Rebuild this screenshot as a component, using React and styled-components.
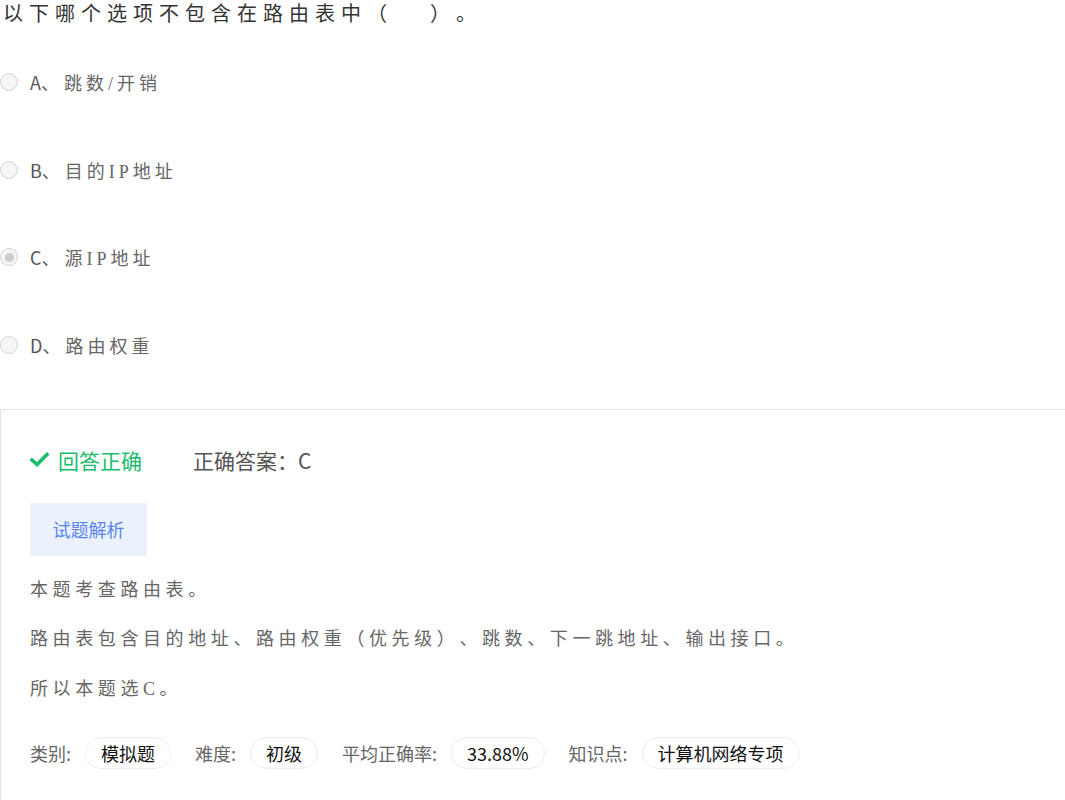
import React from "react";
import styled, { createGlobalStyle } from "styled-components";

const Global = createGlobalStyle`
  html, body { margin: 0; padding: 0; background: #fff; }
  body {
    font-family: "Noto Sans CJK SC", "Noto Sans", sans-serif;
    text-spacing-trim: space-all;
  }
`;

const Page = styled.div`
  width: 1065px;
  box-sizing: border-box;
`;

const Question = styled.div`
  font-family: "Liberation Serif", "Noto Sans CJK SC", serif;
  font-size: 20px;
  letter-spacing: 6px;
  line-height: 28px;
  color: #333;
  padding-left: 3px;
  white-space: pre;
`;

const Options = styled.div`
  margin-top: 34px;
  display: flex;
  flex-direction: column;
`;

const Option = styled.label`
  display: flex;
  align-items: center;
  height: 40px;
  margin-bottom: 47.5px;
`;

const Radio = styled.span`
  width: 18px;
  height: 18px;
  box-sizing: border-box;
  border-radius: 50%;
  border: 1px solid #d4d4d4;
  background: #f5f5f5;
  display: flex;
  align-items: center;
  justify-content: center;
  &::after {
    content: "";
    width: 9px;
    height: 9px;
    border-radius: 50%;
    background: ${(p) => (p.checked ? "#cdcdcd" : "transparent")};
  }
`;

const Letter = styled.span`
  font-family: "Noto Sans CJK SC", sans-serif;
  font-size: 18px;
  color: #555;
  margin-left: 12px;
`;

const OptionText = styled.span`
  font-family: "Liberation Serif", "Noto Sans CJK SC", serif;
  font-size: 18px;
  letter-spacing: 4px;
  color: #666;
  margin-left: 5px;
`;

const Panel = styled.div`
  margin-top: -3.5px;
  border-top: 1px solid #e3e3e3;
  border-left: 1px solid #e3e3e3;
  padding: 35px 30px 40px 29px;
`;

const ResultRow = styled.div`
  display: flex;
  align-items: center;
  height: 30px;
  font-size: 21px;
`;

const Correct = styled.span`
  display: flex;
  align-items: center;
  gap: 9px;
  color: #19be6b;
`;

const Answer = styled.span`
  color: #555;
  margin-left: 51px;
`;

const AnalysisButton = styled.div`
  margin-top: 28px;
  width: 117px;
  height: 53px;
  background: #ebf2fe;
  color: #5a83f0;
  font-size: 18px;
  display: flex;
  align-items: center;
  justify-content: center;
`;

const Explain = styled.div`
  margin-top: 10px;
  font-family: "Liberation Serif", "Noto Sans CJK SC", serif;
  font-size: 18px;
  letter-spacing: 4.6px;
  line-height: 49.5px;
  color: #666;
`;

const Para = styled.p`
  margin: 0;
`;

const Tags = styled.div`
  margin-top: 23px;
  display: flex;
  align-items: center;
  font-size: 18px;
`;

const TagLabel = styled.span`
  color: #666;
  margin-right: 14px;
`;

const Tag = styled.span`
  display: inline-flex;
  align-items: center;
  height: 32px;
  box-sizing: border-box;
  padding: 0 15px;
  border: 1px solid #ececec;
  border-radius: 16px;
  color: #111;
  margin-right: 24px;
`;

const Check = () => (
  <svg width="19" height="15" viewBox="0 0 19 15">
    <path d="M2 8 L7 12.5 L17 2.5" fill="none" stroke="#19be6b" strokeWidth="3.6" strokeLinecap="square" />
  </svg>
);

const options = [
  ["A", "跳数/开销"],
  ["B", "目的IP地址"],
  ["C", "源IP地址", true],
  ["D", "路由权重"],
];

export default function App() {
  return (
    <Page>
      <Global />
      <Question>以下哪个选项不包含在路由表中（　 ）。</Question>
      <Options>
        {options.map(([l, t, c]) => (
          <Option key={l}>
            <Radio checked={!!c} />
            <Letter>{l}、</Letter>
            <OptionText>{t}</OptionText>
          </Option>
        ))}
      </Options>
      <Panel>
        <ResultRow>
          <Correct>
            <Check />
            回答正确
          </Correct>
          <Answer>正确答案：C</Answer>
        </ResultRow>
        <AnalysisButton>试题解析</AnalysisButton>
        <Explain>
          <Para>本题考查路由表。</Para>
          <Para>路由表包含目的地址、路由权重（优先级）、跳数、下一跳地址、输出接口。</Para>
          <Para>所以本题选C。</Para>
        </Explain>
        <Tags>
          <TagLabel>类别:</TagLabel>
          <Tag>模拟题</Tag>
          <TagLabel>难度:</TagLabel>
          <Tag>初级</Tag>
          <TagLabel>平均正确率:</TagLabel>
          <Tag>33.88%</Tag>
          <TagLabel>知识点:</TagLabel>
          <Tag>计算机网络专项</Tag>
        </Tags>
      </Panel>
    </Page>
  );
}
